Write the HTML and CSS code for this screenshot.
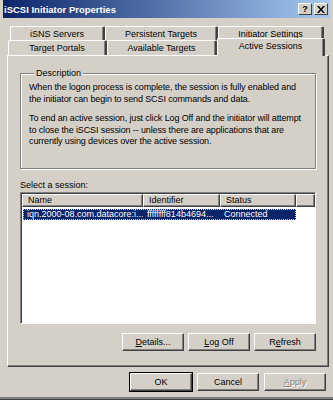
FILE: index.html
```html
<!DOCTYPE html>
<html lang="en">
<head>
  <meta charset="UTF-8">
  <title>iSCSI Initiator Properties</title>
  <link rel="stylesheet" href="styles.css">
</head>
<body>
  <div class="window">
    <!-- Title bar -->
    <div class="titlebar">
      <span class="title">iSCSI Initiator Properties</span>
      <div class="caption-buttons">
        <span class="cap-btn">?</span>
        <span class="cap-btn close">
          <svg width="8" height="7" viewBox="0 0 8 7"><path d="M0 0h2l2 2.5L6 0h2L5 3.5 8 7H6L4 4.5 2 7H0l3-3.5z" fill="#000"/></svg>
        </span>
      </div>
    </div>

    <!-- Tabs -->
    <div class="tabs">
      <div class="tab-row back">
        <div class="tab w1">iSNS Servers</div>
        <div class="tab w2">Persistent Targets</div>
        <div class="tab w3">Initiator Settings</div>
      </div>
      <div class="tab-row front">
        <div class="tab w4">Target Portals</div>
        <div class="tab w5">Available Targets</div>
        <div class="tab w6 active">Active Sessions</div>
      </div>
    </div>

    <div class="panel">
      <div class="group">
        <div class="group-label">Description</div>
        <p>When the logon process is complete, the session is fully enabled and the initiator can begin to send SCSI commands and data.</p>
        <p>To end an active session, just click Log Off and the initiator will attempt to close the iSCSI session -- unless there are applications that are currently using devices over the active session.</p>
      </div>

      <div class="list-label">Select a session:</div>
      <div class="listview">
        <div class="list-header">
          <div class="col c-name">Name</div>
          <div class="col c-id">Identifier</div>
          <div class="col c-status">Status</div>
          <div class="col c-rest"></div>
        </div>
        <div class="list-row selected">
          <span class="c-name">iqn.2000-08.com.datacore:i...</span>
          <span class="c-id">ffffffff814b4694...</span>
          <span class="c-status">Connected</span>
        </div>
      </div>

      <div class="panel-buttons">
        <button class="btn"><u>D</u>etails...</button>
        <button class="btn"><u>L</u>og Off</button>
        <button class="btn">R<u>e</u>fresh</button>
      </div>
    </div>

    <div class="dialog-buttons">
      <button class="btn default">OK</button>
      <button class="btn">Cancel</button>
      <button class="btn disabled"><u>A</u>pply</button>
    </div>
  </div>
</body>
</html>
```

FILE: styles.css
```css
body {
  margin: 0;
  font-family: 'Liberation Sans', Arial, sans-serif;
  font-size: 9px;
  color: #000;
}

.window {
  width: 333px;
  height: 400px;
  box-sizing: border-box;
  background: #d4d0c8;
  padding: 0 3px;
  border-bottom: 1px solid #404040;
  box-shadow: inset 0 -2px 0 #808080;
}

/* Title bar */
.titlebar {
  height: 18px;
  display: flex;
  align-items: center;
  justify-content: space-between;
  background: linear-gradient(to right, #0a246a, #a6caf0);
  padding: 0 2px 0 1px;
}

.title {
  color: #fff;
  font-weight: bold;
  font-size: 9.5px;
}

.caption-buttons {
  display: flex;
  gap: 2px;
}

.cap-btn {
  width: 14px;
  height: 12px;
  box-sizing: border-box;
  background: #d4d0c8;
  border: 1px solid;
  border-color: #fff #404040 #404040 #fff;
  display: flex;
  align-items: center;
  justify-content: center;
  font-weight: bold;
  font-size: 9px;
}

/* Tabs */
.tabs {
  margin-top: 8px;
}

.tab-row {
  display: flex;
  align-items: flex-end;
}

.tab-row.back {
  margin-left: 7px;
  height: 14px;
}

.tab-row.front {
  margin-left: 5px;
  height: 15px;
}

.tab {
  box-sizing: border-box;
  height: 14px;
  display: flex;
  align-items: center;
  justify-content: center;
  border-top: 1px solid #fff;
  border-left: 1px solid #fff;
  border-right: 2px solid #404040;
  border-radius: 2px 2px 0 0;
  box-shadow: inset -1px 0 0 #808080;
  background: #d4d0c8;
}

.tab-row.front .tab {
  height: 15px;
}

.w1 { width: 95px; }
.w2 { width: 113px; }
.w3 { width: 106px; }
.w4 { width: 99px; }
.w5 { width: 110px; }
.w6 { width: 108px; }

.tab-row.front .tab.active {
  height: 18px;
  margin-bottom: -1px;
  padding-bottom: 3px;
  position: relative;
}

/* Tab page */
.panel {
  height: 312px;
  margin: 0 1px 0 4px;
  box-sizing: border-box;
  border-top: 1px solid #fff;
  border-left: 1px solid #fff;
  border-right: 1px solid #404040;
  border-bottom: 1px solid #404040;
  box-shadow: inset -1px -1px 0 #808080;
  padding: 17px 12px 0 12px;
}

.group {
  height: 96px;
  box-sizing: border-box;
  border: 1px solid #808080;
  box-shadow: inset 1px 1px 0 #fff, 1px 1px 0 #fff;
  padding: 0 8px;
}

.group-label {
  display: table;
  margin: -6px 0 0 5px;
  padding: 0 2px;
  background: #d4d0c8;
  line-height: 11px;
}

.group p {
  margin: 3px 0 8px;
  line-height: 11.5px;
  letter-spacing: -0.12px;
}

.list-label {
  margin-top: 11px;
  line-height: 11px;
}

.listview {
  height: 132px;
  margin-top: 1px;
  box-sizing: border-box;
  background: #fff;
  border: 1px solid;
  border-color: #808080 #fff #fff #808080;
  box-shadow: inset 1px 1px 0 #404040;
  padding: 1px 0 0 1px;
}

.list-header {
  display: flex;
  height: 13px;
}

.col {
  box-sizing: border-box;
  height: 13px;
  background: #d4d0c8;
  border-top: 1px solid #fff;
  border-left: 1px solid #fff;
  border-right: 1px solid #404040;
  border-bottom: 1px solid #404040;
  box-shadow: inset -1px -1px 0 #808080;
  padding-left: 5px;
  line-height: 11px;
}

.c-name { width: 121px; }
.c-id { width: 77px; }
.c-status { width: 76px; }
.c-rest { flex: 1; }

.list-row {
  display: flex;
  height: 11px;
  margin: 2px 0 0 1px;
  line-height: 11px;
}

.list-row span {
  box-sizing: border-box;
  padding-left: 4px;
  white-space: nowrap;
  overflow: hidden;
}

.list-row .c-name { width: 120px; }

.list-row.selected {
  width: 273px;
  background: #0a246a;
  color: #fff;
  outline: 1px dotted #d4d0c8;
  outline-offset: -1px;
}

/* Buttons */
.btn {
  font-family: inherit;
  font-size: 9px;
  width: 62px;
  height: 18px;
  padding: 0;
  background: #d4d0c8;
  color: #000;
  border: 1px solid;
  border-color: #fff #404040 #404040 #fff;
  box-shadow: inset -1px -1px 0 #808080;
}

.panel-buttons {
  display: flex;
  justify-content: flex-end;
  gap: 4px;
  margin-top: 9px;
}

.dialog-buttons {
  display: flex;
  justify-content: flex-end;
  gap: 5px;
  margin: 6px 4px 0 0;
}

.btn.default {
  outline: 1px solid #000;
  border-color: #fff #404040 #404040 #fff;
}

.btn.disabled {
  color: #808080;
  text-shadow: 1px 1px 0 #fff;
}
```
